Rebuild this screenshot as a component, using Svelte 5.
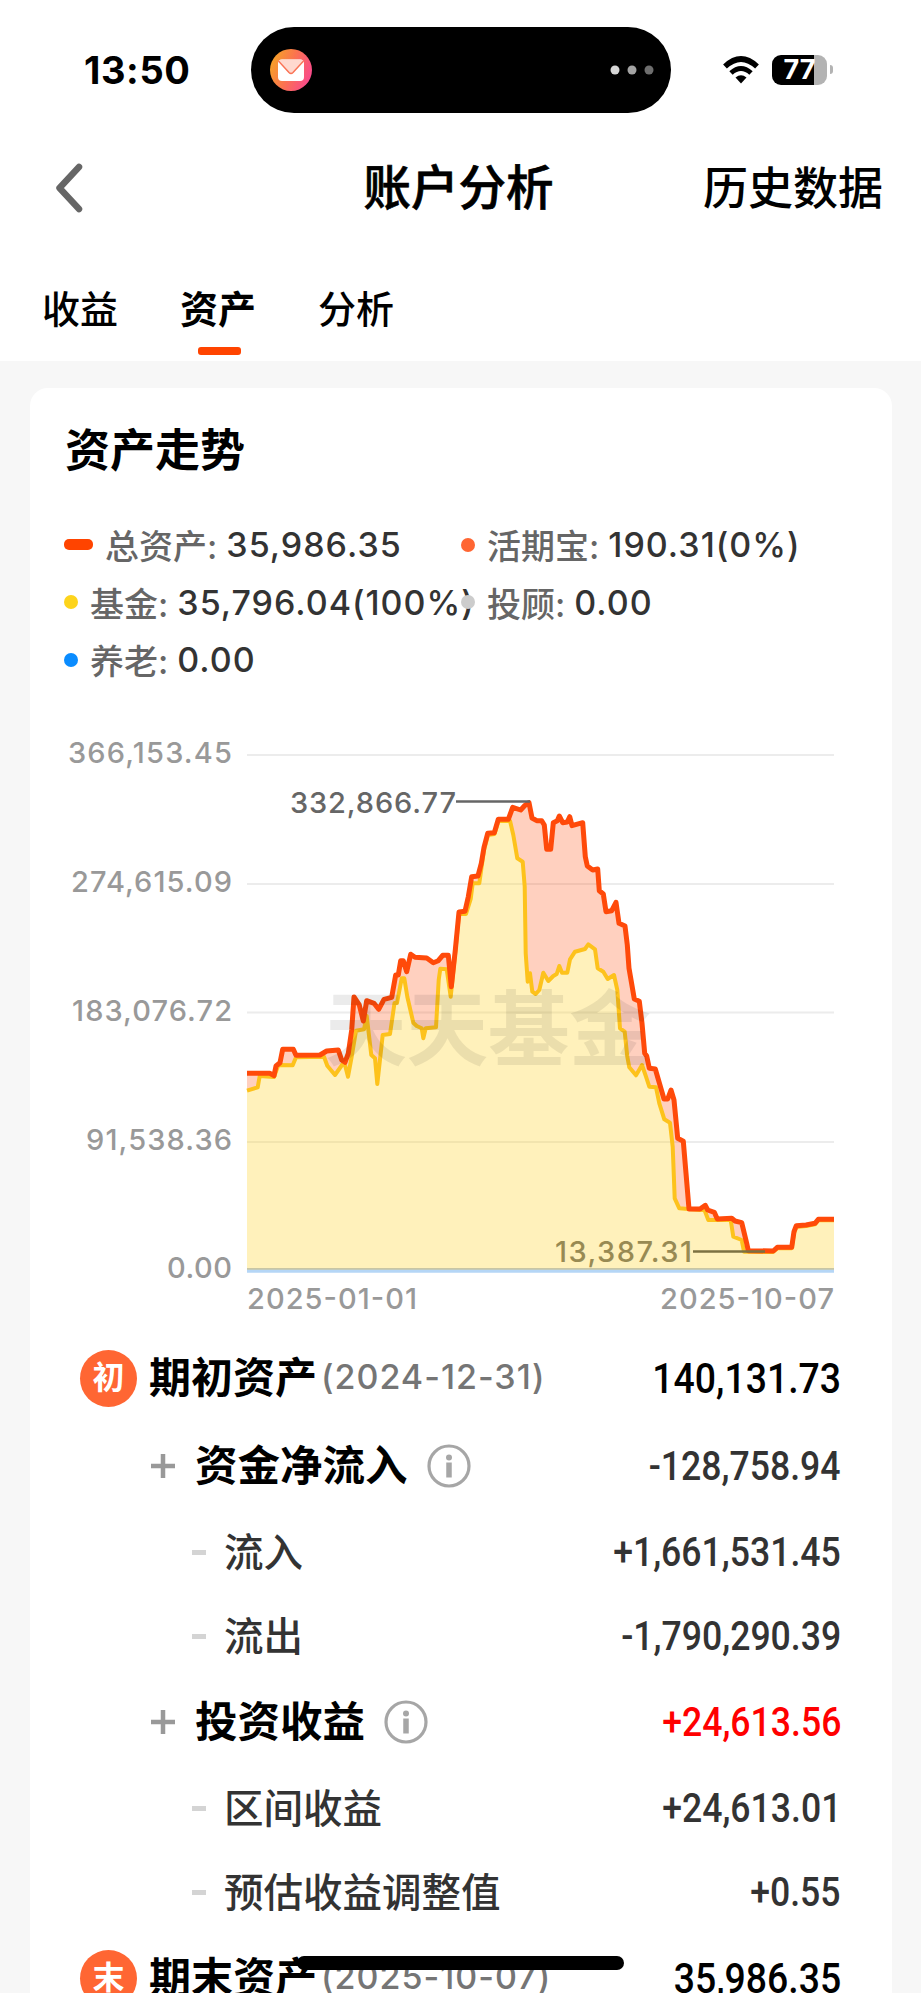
<script lang="ts">
  interface LegendItem {
    name: string;
    value: string;
    color: string;
    wide?: boolean;
  }

  interface DetailRow {
    kind: 'main' | 'group' | 'sub';
    label: string;
    value: string;
    badge?: string;
    date?: string;
    red?: boolean;
  }

  const tabs = ['收益', '资产', '分析'];
  let activeTab = '资产';

  const legend: LegendItem[] = [
    { name: '总资产', value: '35,986.35', color: '#ff4400', wide: true },
    { name: '活期宝', value: '190.31(0%)', color: '#ff6633' },
    { name: '基金', value: '35,796.04(100%)', color: '#fdd41c' },
    { name: '投顾', value: '0.00', color: '#cccccc' },
    { name: '养老', value: '0.00', color: '#0a8cff' }
  ];

  const rows: DetailRow[] = [
    { kind: 'main', badge: '初', label: '期初资产', date: '(2024-12-31)', value: '140,131.73' },
    { kind: 'group', label: '资金净流入', value: '-128,758.94' },
    { kind: 'sub', label: '流入', value: '+1,661,531.45' },
    { kind: 'sub', label: '流出', value: '-1,790,290.39' },
    { kind: 'group', label: '投资收益', value: '+24,613.56', red: true },
    { kind: 'sub', label: '区间收益', value: '+24,613.01' },
    { kind: 'sub', label: '预估收益调整值', value: '+0.55' },
    { kind: 'main', badge: '末', label: '期末资产', date: '(2025-10-07)', value: '35,986.35' }
  ];

  const yAxis = [
    { text: '366,153.45', y: 755, x: 69 },
    { text: '274,615.09', y: 884, x: 72 },
    { text: '183,076.72', y: 1012.5, x: 73 },
    { text: '91,538.36', y: 1142, x: 87 },
    { text: '0.00', y: 1269.5, x: 168 }
  ];

  // Chart points, "x,y" in chart space
  const total =
    '247,1073.3 270,1073.3 274,1075.7 276,1066 280,1062.7 282.7,1049.3 293.3,1049.3 296,1055.3 320,1055 326.7,1051 338.3,1050 341.7,1060 345,1062.3 348.3,1053.3 351.7,1030 354,997 359.3,1005 363.3,1021 366.7,1000.7 374,1003.3 378.7,1009.3 384,999.3 391.7,997.3 395.7,975 398.3,975 400.7,960.7 403.3,960.7 406.7,971.7 410.7,954.3 415,957.3 426.7,958 433.3,962.7 438.3,960.7 442.7,955.3 448.3,955.3 451.3,986.7 455.3,950 459,912 465,911.3 468.3,896.7 471.7,876.7 478,876 481.3,863.3 484,847.3 487.7,833.3 494.3,832.7 498.3,819.3 508.3,819.3 512.7,807.3 520.7,810 525,805.3 529,802.7 532,818 536.7,820.7 541.7,820.7 544.3,825 546.7,849.3 550.7,849.3 553.3,822.7 557.3,820.7 559.3,816 562.7,822.7 567.3,822 569.7,816.7 572,825.7 582.7,822.7 585.3,856.7 587.3,866 592.7,870 597.7,869 599.3,890.7 603.3,894 606,911.7 611.7,910.7 616,902.3 619,923.3 625,926 627.3,945 629,968.3 634.3,999 639.3,1001.3 642,1023.3 644.7,1053.3 646.7,1056 649.3,1068.3 655.3,1069 658.7,1080.7 664,1099 667.7,1099 671,1090 674,1100 677.7,1138.3 683.3,1141.3 686,1173.3 689,1209 700,1209 705.3,1205.3 707.7,1210 714.3,1212.3 717.3,1219 731.7,1218.3 735,1221 741.7,1222.7 746.7,1243.3 748.3,1250.7 773.3,1251 777.3,1247.3 791.7,1247.3 794,1231.7 796.3,1225.7 806,1225 815,1223.3 818.3,1219.3 834,1219.3';
  const fund =
    '247,1090.7 257.7,1087.3 259.7,1076 274,1077 278.3,1065 292.7,1065.3 296,1057.3 324,1056.7 327.3,1065.7 335,1075 342.7,1064 345,1065 348,1076.7 351.7,1056.7 356,1030.7 364,1029.3 366.7,1016 371.3,1055 375,1058.3 377.3,1084 382.7,1035 390,1034 394.5,1003 397,1003 401.7,978.3 404.3,978.3 407.3,996.7 413.3,1022.7 416.7,1026 421.7,1028.3 423.3,1038.3 425.7,1028.3 436,1027.3 438.7,980 440.3,968.7 446.7,969.3 450.7,996.7 455.3,952 459,914 466,914 470.7,899 472.7,883.3 479.3,883.3 484,850 488,835 494.5,834 498.5,821 510,820.7 513.3,835 517.3,858.3 522.7,861.7 524.7,886.7 525.7,953.3 527.7,981.7 530,973.3 532.3,991.7 535.7,994 539.3,990 543.3,972.7 548.3,981 553.3,976 556.7,974 559.3,966 562,972.7 567.3,972.7 570,959.3 575,951.7 585,949 588.3,944.3 595,949.3 597.7,968.3 603.3,971.7 607.7,979 614,975 617.3,990 620,1028.3 624.7,1031.7 627.3,1056.7 629.3,1067.3 636,1075.3 642,1065 646,1076.7 649.3,1086.7 656,1087.3 659.3,1103.3 664.3,1119.3 670,1122.7 672.7,1146.7 674.7,1198.3 679.3,1208.3 700,1210 704.5,1210 708.3,1220 730.7,1220 733.3,1236.7 741.7,1240 744,1251.7 773,1252 777.3,1248.3 791.7,1248.3 794,1233 796.3,1227 806,1226 815,1224.3 818.3,1220.3 834,1220.3';

  const fundArea = `${fund} 834,1270 247,1270`;
  const gapArea = `${total} ${fund.split(' ').reverse().join(' ')}`;
</script>

<div class="screen">
  <div class="status">
    <span class="time">13:50</span>
    <div class="island">
      <svg width="42" height="42" viewBox="0 0 42 42">
        <defs>
          <linearGradient id="mail" x1="0" y1="0.2" x2="1" y2="0.6">
            <stop offset="0" stop-color="#f6a623" />
            <stop offset="0.5" stop-color="#fb7350" />
            <stop offset="1" stop-color="#f94a8c" />
          </linearGradient>
        </defs>
        <circle cx="21" cy="21" r="21" fill="url(#mail)" />
        <rect x="8" y="10.500" width="26" height="21.500" rx="4" fill="#fff" />
        <path d="M9 11.500L19 23Q21 25.500 23 23L33 11.500Q32 10.500 30 10.500H12Q10 10.500 9 11.500Z" fill="#ffd9cf" />
        <path d="M8.500 12L19 23.500Q21 25.500 23 23.500L33.500 12" fill="none" stroke="#fa7355" stroke-width="1.500" />
      </svg>
      <svg width="44" height="10" viewBox="0 0 44 10">
        <circle cx="5" cy="5" r="4.500" fill="#d6d6d6" />
        <circle cx="22" cy="5" r="4.500" fill="#a3a3a3" />
        <circle cx="39" cy="5" r="4.500" fill="#6e6e6e" />
      </svg>
    </div>
    <svg class="wifi" width="38" height="28" viewBox="0 0 38 28">
      <path d="M3 10.500Q19 -4.500 35 10.500" fill="none" stroke="#000" stroke-width="5.500" />
      <path d="M9 17Q19 8 29 17" fill="none" stroke="#000" stroke-width="5" />
      <path d="M13.500 21.500Q19 17 24.500 21.500L19 27.500Z" fill="#000" />
    </svg>
    <div class="battery">
      <div class="cell"><span>77</span></div>
      <i class="nub"></i>
    </div>
  </div>

  <header>
    <button class="back" aria-label="返回">
      <svg width="30" height="52" viewBox="0 0 30 52">
        <path d="M25 5L5.500 26L25 47" fill="none" stroke="#666" stroke-width="6.500" stroke-linecap="round" stroke-linejoin="round" />
      </svg>
    </button>
    <h1>账户分析</h1>
    <span class="history">历史数据</span>
  </header>

  <nav>
    {#each tabs as tab}
      <button class="tab" class:active={activeTab === tab} on:click={() => (activeTab = tab)}>{tab}</button>
    {/each}
  </nav>

  <main>
    <section class="card">
      <h2>资产走势</h2>

      <div class="legend">
        {#each legend as item}
          <div class="legend-item">
            <i class="mark" class:wide={item.wide} style="background: {item.color}"></i>
            <span class="name">{item.name}:</span>
            <span class="num">{item.value}</span>
          </div>
        {/each}
      </div>

      <svg class="chart" width="862" height="634" viewBox="30 700 862 634">
        {#each yAxis as tick}
          <line x1="247" x2="834" y1={tick.y} y2={tick.y} stroke="#ececec" stroke-width="2" />
          <text x={tick.x - 1} y={tick.y + 8} textLength={233 - tick.x} fill="#999">{tick.text}</text>
        {/each}

        <polygon points={gapArea} fill="#ff4400" fill-opacity="0.25" />
        <polygon points={fundArea} fill="#ffd21e" fill-opacity="0.3" />
        <line x1="247" x2="834" y1="1269" y2="1269" stroke="#c9c6a4" stroke-width="2" />
        <line x1="247" x2="834" y1="1271.300" y2="1271.300" stroke="#b5d6f6" stroke-width="3" />
        <polyline points={fund} stroke="#fdc21c" stroke-width="4" />
        <polyline points={total} stroke="#ff4a0a" stroke-width="5" />

        <!-- highest and lowest point -->
        <text x="290" y="813" textLength="166" fill="#666">332,866.77</text>
        <line x1="456" x2="530" y1="801.500" y2="801.500" stroke="#666" stroke-width="2.500" />
        <text x="555" y="1262" textLength="137" fill="#988a53">13,387.31</text>
        <line x1="693" x2="765" y1="1251.500" y2="1251.500" stroke="#7c7142" stroke-width="2.500" />

        <text x="247" y="1309" textLength="170" fill="#999">2025-01-01</text>
        <text x="660" y="1309" textLength="174" fill="#999">2025-10-07</text>
        <text class="watermark" x="325" y="1059" textLength="326">天天基金</text>
      </svg>

      <div class="rows">
        {#each rows as row}
          <div class="row {row.kind}">
            {#if row.kind === 'main'}
              <span class="badge">{row.badge}</span>
            {:else if row.kind === 'group'}
              <svg class="plus" width="24" height="24" viewBox="0 0 24 24">
                <path d="M0 12H24M12 0V24" stroke="#999" stroke-width="4.500" />
              </svg>
            {:else}
              <i class="dash"></i>
            {/if}
            <span class="label">{row.label}</span>
            {#if row.date}
              <span class="date">{row.date}</span>
            {/if}
            {#if row.kind === 'group'}
              <svg class="info" width="44" height="44" viewBox="0 0 44 44">
                <circle cx="22" cy="22" r="20" fill="none" stroke="#a6a6a6" stroke-width="3.200" />
                <circle cx="22" cy="13.500" r="3" fill="#a6a6a6" />
                <path d="M22 18.500V33.500" stroke="#a6a6a6" stroke-width="5.500" />
              </svg>
            {/if}
            <span class="value" class:red={row.red}>{row.value}</span>
          </div>
        {/each}
      </div>
    </section>
  </main>

  <div class="home-bar"></div>
</div>

<style>
  :global(body) {
    background: #fff;
  }

  .screen {
    position: relative;
    width: 921px;
    height: 1993px;
    overflow: hidden;
    display: flex;
    flex-direction: column;
    background: #fff;
    color: #000;
    font-family: Inter, 'Noto Sans CJK SC', sans-serif;
  }

  button {
    border: 0;
    padding: 0;
    background: none;
    color: inherit;
    font-family: inherit;
  }

  h1,
  h2 {
    margin: 0;
  }

  /* Status bar */
  .status {
    display: flex;
    align-items: center;
    height: 139px;
    flex: none;
    box-sizing: border-box;
    padding-left: 84px;
  }

  .time {
    width: 167px;
    font-size: 38px;
    font-weight: 700;
    line-height: 38px;
    letter-spacing: 0.6px;
  }

  .island {
    display: flex;
    align-items: center;
    justify-content: space-between;
    box-sizing: border-box;
    width: 420px;
    height: 86px;
    padding: 0 17px 0 19px;
    border-radius: 43px;
    background: #000;
  }

  .wifi {
    margin-left: 51px;
  }

  .battery {
    display: flex;
    align-items: center;
    gap: 3px;
    margin-left: 12px;
  }

  .cell {
    width: 55px;
    height: 30px;
    border-radius: 9px;
    background: linear-gradient(90deg, #000 77%, #b3b3b3 77%);
    color: #fff;
    text-align: center;
    font-size: 27px;
    font-weight: 700;
    line-height: 30px;
  }

  .nub {
    width: 3px;
    height: 9px;
    border-radius: 0 3px 3px 0;
    background: #b3b3b3;
  }

  /* Title bar */
  header {
    display: grid;
    grid-template-columns: 1fr auto 1fr;
    align-items: center;
    flex: none;
    height: 97px;
    padding: 0 38px 0 54px;
  }

  .back {
    display: flex;
    justify-self: start;
  }

  h1 {
    margin-left: -20px;
    font-size: 47.5px;
    font-weight: 500;
    line-height: 60px;
    -webkit-text-stroke: 0.7px #000;
  }

  .history {
    justify-self: end;
    padding-top: 3px;
    font-size: 45px;
    font-weight: 500;
    line-height: 60px;
  }

  nav {
    display: flex;
    gap: 62px;
    flex: none;
    height: 125px;
    padding-left: 42px;
  }

  .tab {
    display: flex;
    flex-direction: column;
    align-items: center;
    padding-top: 45px;
    font-size: 38px;
    font-weight: 500;
    line-height: 56px;
  }

  .tab.active {
    font-weight: 700;
  }

  .tab.active::after {
    content: '';
    width: 43px;
    height: 8px;
    margin: 10px 0 0 3px;
    border-radius: 3px;
    background: #ff4400;
  }

  /* Card */
  main {
    flex: 1;
    padding: 27px 29px 0 30px;
    background: #f7f7f7;
  }

  .card {
    height: 1700px;
    border-radius: 18px;
    background: #fff;
  }

  h2 {
    padding: 33px 0 0 35px;
    font-size: 45px;
    font-weight: 700;
    line-height: 60px;
  }

  .legend {
    display: grid;
    grid-template-columns: 397px 1fr;
    grid-auto-rows: 57.5px;
    padding: 35px 0 0 34px;
    height: 184px;
    box-sizing: content-box;
    font-size: 34px;
  }

  .legend-item {
    display: flex;
    align-items: center;
    white-space: nowrap;
  }

  .mark {
    position: relative;
    z-index: 1;
    flex: none;
    width: 14px;
    height: 14px;
    margin-right: 12px;
    border-radius: 50%;
  }

  .mark.wide {
    width: 29px;
    height: 11px;
    border-radius: 5px;
  }

  .name {
    margin-right: 9px;
    color: #666;
    font-weight: 500;
  }

  .num {
    color: #333;
    font-weight: 500;
    letter-spacing: 1px;
  }

  .chart {
    display: block;
    margin-top: 0;
  }

  .chart text {
    font-size: 29px;
    font-weight: 500;
  }

  .chart polyline {
    fill: none;
    stroke-linejoin: round;
  }

  .chart .watermark {
    font-size: 82px;
    font-weight: 700;
    fill: #000;
    fill-opacity: 0.08;
  }

  /* Detail list */
  .row {
    display: flex;
    align-items: center;
    height: 88px;
    padding-right: 51px;
    white-space: nowrap;
  }

  .row.main {
    padding-left: 50px;
  }

  .row.group {
    padding-left: 121px;
  }

  .row.sub {
    height: 84px;
    padding-left: 162px;
  }

  .badge {
    width: 57px;
    height: 57px;
    margin-right: 12px;
    border-radius: 50%;
    background: #ff6633;
    color: #fff;
    text-align: center;
    font-size: 32px;
    font-weight: 700;
    line-height: 55px;
  }

  .label {
    font-size: 42px;
    font-weight: 700;
    line-height: 60px;
  }

  .group .label {
    margin-left: 20px;
    font-size: 42.5px;
  }

  .sub .label {
    margin-left: 18px;
    padding-top: 2px;
    color: #333;
    font-size: 39.5px;
    font-weight: 500;
  }

  .date {
    margin-left: 4px;
    padding-bottom: 4px;
    color: #757575;
    font-size: 34px;
    font-weight: 500;
    letter-spacing: 1px;
  }

  .info {
    margin-left: 19px;
  }

  .dash {
    width: 14px;
    height: 5px;
    background: #d4d4d4;
  }

  .value {
    margin-left: auto;
    color: #333;
    font-family: Roboto, sans-serif;
    font-size: 40px;
    font-weight: 500;
    transform: scaleX(0.89);
    transform-origin: right center;
  }

  .main .value {
    color: #000;
    font-size: 42px;
  }

  .value.red {
    color: #ff0000;
  }

  .home-bar {
    position: absolute;
    left: 297px;
    top: 1956px;
    width: 327px;
    height: 14px;
    border-radius: 7px;
    background: #000;
  }
</style>
